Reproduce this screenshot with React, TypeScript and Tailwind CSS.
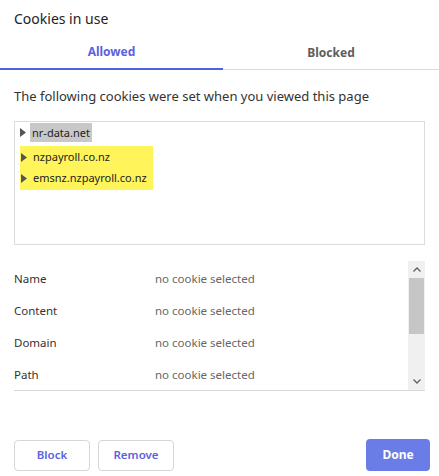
import React from "react";

const font = { fontFamily: '"Noto Sans", "Open Sans", sans-serif' };

function Tri() {
  return (
    <svg width="6" height="9" viewBox="0 0 6 9" className="shrink-0">
      <path d="M0 0 L6 4.5 L0 9 Z" fill="#555" />
    </svg>
  );
}

function Row({ label }: { label: string }) {
  return (
    <div className="flex h-[32px] items-center text-[11.5px]">
      <div className="w-[141px] text-[#333]">{label}</div>
      <div className="text-[#666]">no cookie selected</div>
    </div>
  );
}

export default function App() {
  return (
    <div className="w-[439px] h-[476px] bg-white relative" style={font}>
      <div className="px-[14px] pt-[7px] text-[14px] text-[#222] leading-[24px]">Cookies in use</div>
      <div className="flex mt-[4px] h-[35px]">
        <div className="w-[223px] flex items-center justify-center text-[12px] font-bold text-[#5b62e0] border-b-2 border-[#4d63dc]">
          Allowed
        </div>
        <div className="flex-1 flex items-center justify-center text-[12px] font-bold text-[#5d5d5d] border-b border-[#dadada] pt-[1px]">
          Blocked
        </div>
      </div>
      <div className="px-[14px] mt-[17px] text-[13px] text-[#333] leading-[18px]">
        The following cookies were set when you viewed this page
      </div>
      <div className="mx-[14px] mt-[16px] h-[124px] border border-[#dcdcdc] pt-[1px] pl-[5px] text-[11px] text-[#222]">
        <div className="flex items-center h-[19px] gap-[4px]">
          <Tri />
          <span className="bg-[#c8c8c8] px-[2px] leading-[19px]">nr-data.net</span>
        </div>
        <div className="bg-[#fff55a] w-[133px] mt-[4px] py-[1px]">
          <div className="flex items-center h-[21px] gap-[6px] pl-[1px]">
            <Tri />
            <span>nzpayroll.co.nz</span>
          </div>
          <div className="flex items-center h-[21px] gap-[6px] pl-[1px]">
            <Tri />
            <span>emsnz.nzpayroll.co.nz</span>
          </div>
        </div>
      </div>
      <div className="mx-[14px] mt-[16px] h-[130px] border-b border-[#d8d8d8] flex">
        <div className="flex-1 pt-[2px]">
          <Row label="Name" />
          <Row label="Content" />
          <Row label="Domain" />
          <Row label="Path" />
        </div>
        <div className="w-[17px] bg-[#f0f0f0] flex flex-col items-center">
          <div className="h-[17px] flex items-center justify-center">
            <svg width="8" height="5" viewBox="0 0 8 5"><path d="M0.5 4.5 L4 1 L7.5 4.5" stroke="#606060" strokeWidth="1.3" fill="none" /></svg>
          </div>
          <div className="w-[15px] h-[56px] bg-[#c6c6c6]" />
          <div className="flex-1" />
          <div className="h-[17px] flex items-center justify-center">
            <svg width="8" height="5" viewBox="0 0 8 5"><path d="M0.5 0.5 L4 4 L7.5 0.5" stroke="#606060" strokeWidth="1.3" fill="none" /></svg>
          </div>
        </div>
      </div>
      <div className="absolute left-[14px] right-[9px] bottom-[5px] flex items-center">
        <button className="w-[76px] h-[31px] border border-[#d6d6d6] rounded-[4px] text-[11.5px] text-[#5b62e0] font-semibold bg-white">Block</button>
        <button className="ml-[8px] w-[76px] h-[31px] border border-[#d6d6d6] rounded-[4px] text-[11.5px] text-[#5b62e0] font-semibold bg-white">Remove</button>
        <div className="flex-1" />
        <button className="w-[64px] h-[32px] rounded-[4px] text-[12px] text-white font-bold bg-[#6a7de6]">Done</button>
      </div>
    </div>
  );
}
